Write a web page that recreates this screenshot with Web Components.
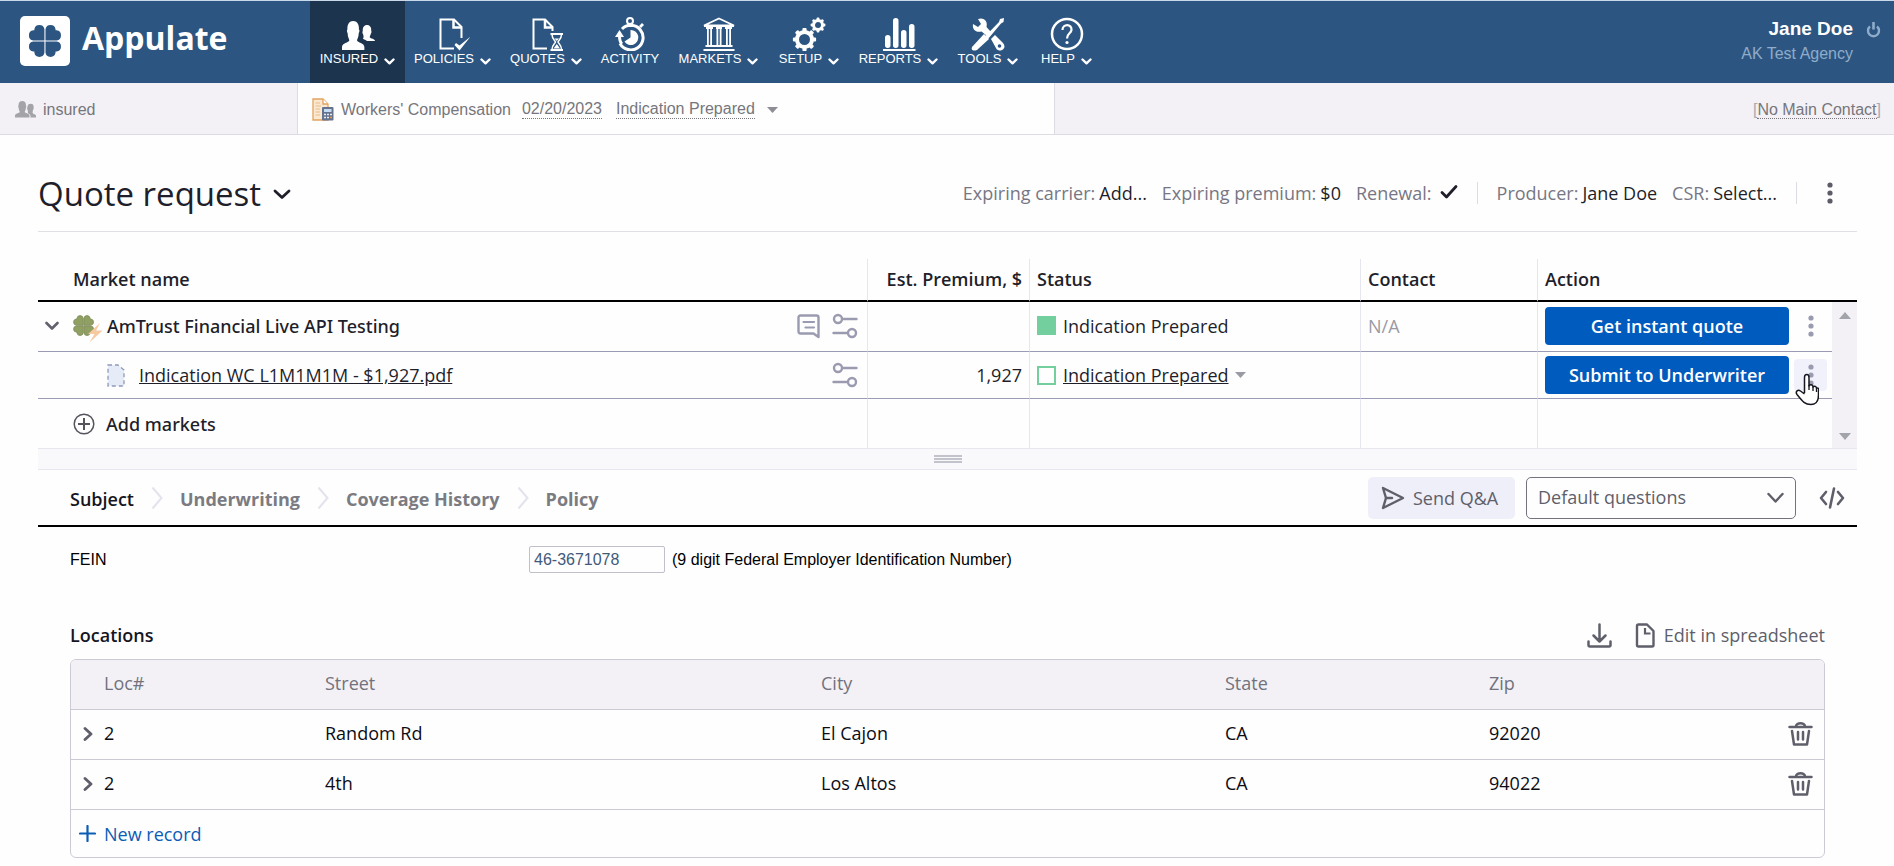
<!DOCTYPE html>
<html lang="en">
<head>
<meta charset="utf-8">
<meta name="viewport" content="width=device-width, initial-scale=1">
<title>Appulate - Quote request</title>
<style>
  body { margin: 0; background: #fefefe; color: #1f1f2b; font: 400 18px/24px "Open Sans", "Noto Sans", sans-serif; }
</style>
</head>
<body>
<appulate-app></appulate-app>

<script>
const QUADRANT = 'M15.5 15.5H5A4.8 4.8 0 0 1 5 6H6V5A4.8 4.8 0 0 1 15.5 5Z';
const CLOVER = `<path d="${QUADRANT}"/><path d="${QUADRANT}" transform="matrix(-1 0 0 1 32 0)"/>
  <path d="${QUADRANT}" transform="matrix(1 0 0 -1 0 32)"/><path d="${QUADRANT}" transform="matrix(-1 0 0 -1 32 32)"/>`;
const PERSON = 'M0 29V26C0 22 8 21.500 8.500 19.500C8.500 18 6.500 16 6.500 12C5.500 11 5.500 9 6.300 8.500C6 3 8.500 0 13 0S20 3 19.700 8.500C20.500 9 20.500 11 19.500 12C19.500 16 17.500 18 17.500 19.500C18 21.500 26 22 26 26V29Z';
const LINE = 'fill="none" stroke="currentColor" stroke-linecap="round" stroke-linejoin="round"';

function gear(cx, cy, r, hole, teeth, w) {
  let s = '';
  for (let i = 0; i < teeth; i++) {
    s += `<rect x="${cx - w / 2}" y="${cy - r - w * 0.5}" width="${w}" height="${w * 1.2}" rx="1" transform="rotate(${i * 360 / teeth} ${cx} ${cy})"/>`;
  }
  const mid = (r + hole) / 2;
  return s + `<circle cx="${cx}" cy="${cy}" r="${mid}" fill="none" stroke="currentColor" stroke-width="${r - hole}"/>`;
}

// name: [width, height, markup]
const ICONS = {
  logo: [50, 50, `<rect width="50" height="50" rx="5" fill="#fff"/><g transform="translate(8 8) scale(1.06)" fill="#2c5681">${CLOVER}</g>`],
  insured: [34, 34, `<g transform="translate(1 4)"><path d="${PERSON}" transform="scale(.86 1)"/><path d="M25 20C23 18.500 21 18.500 21 17.500C22 16 21.500 14.500 21 13C20 12 20.500 10.500 20.800 10C20.500 6.500 22 4 25 4S29.500 6.500 29.200 10C29.800 10.500 29.500 12 28.800 12.800C28.500 14.500 27.500 15.500 27.800 16.500C28.500 17.500 33 17.800 33 20Z"/></g>`],
  policies: [34, 34, `<g fill="none" stroke="currentColor" stroke-width="2"><path d="M18 31.500H4.500V2.500H18L25.500 10V21"/><path d="M17.500 2.500V10.500H25.500" stroke-width="2.500"/></g><path d="M18.500 28L23.500 33.500L34.500 19.500L23.500 28.500L20 26Z"/>`],
  quotes: [34, 34, `<g fill="none" stroke="currentColor" stroke-width="2"><path d="M18 31.500H4.500V2.500H16L23.500 10V14"/><path d="M16 2.500V10.500H23.500" stroke-width="2.500"/></g><g fill="none" stroke="currentColor" stroke-width="1.500"><path d="M21.500 17H34M21.500 33H34" stroke-width="2"/><path d="M23 17.500C23 22 26 23.500 26.500 25C26 26.500 23 28 23 32.500M32.500 17.500C32.500 22 29.500 23.500 29 25C29.500 26.500 32.500 28 32.500 32.500"/><path d="M25.500 21.500H30L27.800 24ZM27.800 27L31 31.500H24.500Z" fill="currentColor" stroke="none"/></g>`],
  activity: [34, 34, `<circle cx="17" cy="4" r="3" fill="none" stroke="currentColor" stroke-width="2"/><path d="M14.500 8h5v2h-5zM26 9l3-3 2 2-3 3z"/><path d="M9 12A12.300 12.300 0 1 1 7 26.500" fill="none" stroke="currentColor" stroke-width="3"/><path d="M2 20L6.500 13L11 20Z"/><path d="M5 19H8C8 22 8.500 24 10 26L7.500 28C5.500 25 5 22 5 19Z"/><path d="M17.500 13A7.500 7.500 0 1 1 11.500 24.500L17.500 20.500Z"/>`],
  markets: [34, 34, `<path d="M17 1.500L32 8.500H2Z" fill="none" stroke="currentColor" stroke-width="1.800"/><path d="M2 8h30v2H2zM4 10h7v2H4zM14 10h6v2h-6zM23 10h7v2h-7zM5 11h1.800v18H5zM8.200 11H10v18H8.200zM14.500 11h1.800v18h-1.800zM17.700 11h1.800v18h-1.800zM24 11h1.800v18H24zM27.200 11H29v18h-1.800zM3.500 28h27v2h-27zM1.500 32h31v2h-31z"/>`],
  setup: [34, 34, gear(12.500, 22.500, 9.500, 5.500, 8, 4.200) + gear(26, 8, 6, 3, 8, 2.800)],
  reports: [34, 34, `<rect x="3" y="18" width="5.500" height="13" rx="2.700"/><rect x="11" y="1" width="5.500" height="30" rx="2.700"/><rect x="19" y="13" width="5.500" height="18" rx="2.700"/><rect x="27" y="7" width="5.500" height="24" rx="2.700"/><path d="M1 32h32.500v2H1z"/>`],
  tools: [34, 34, `<path d="M1 30L13 17L18 22L6 33C2 34.500 0 33 1 30Z"/><path d="M14 19.500L28 5L29 2L33 1L32.500 5L30 6.500L17 22Z"/><path d="M2 7L7 10L10 7L7 2C13 0 17 4 15.500 10L20 15L16 19L10.500 14.500C5 16 1 12.500 2 7Z"/><path d="M20 22L24 18L32 26C34.500 29 33.500 32 31 33C29 34 27 33.500 25.500 32Z"/><circle cx="28.500" cy="29" r="1.800" fill="#2c5681"/>`],
  help: [34, 34, `<circle cx="17" cy="17" r="15" fill="none" stroke="currentColor" stroke-width="2.500"/><path d="M12.500 13C12.500 6.500 22 6.500 21.500 13C21 16.500 17 16.500 17 21.500" fill="none" stroke="currentColor" stroke-width="2.200"/><circle cx="17" cy="25.500" r="1.600"/>`],
  navDown: [11, 7, `<path d="M1.500 1.500L5.500 5.300L9.500 1.500" ${LINE} stroke-width="2.400"/>`],
  power: [15, 17, `<path d="M4 5.500A5.500 5.500 0 1 0 11 5.500" fill="none" stroke="currentColor" stroke-width="2.400"/><path d="M7.500 1V8.500" stroke="currentColor" stroke-width="2.600"/>`],
  people: [21, 17, `<g transform="scale(.62 .57)"><path d="${PERSON}" transform="scale(.9 1)"/><path d="M25 29V26C24.500 23 21.500 22.500 20.500 20C21.500 19 20.500 17 20 15C19 14 19.500 12 20 11C20.200 7 22 5 25.500 5S30.500 7.500 30 12C30.500 13 30 15 29 15.500C29 18 28 19.500 28.500 21C29.500 23 34 23.500 34 26V29Z"/></g>`],
  policyDoc: [22, 23, `<path d="M1 1H11L16 6V22H1Z" fill="#fbe8d0" stroke="#e3a35e" stroke-width="1.300"/><path d="M11 1V6H16" fill="#fff" stroke="#e3a35e" stroke-width="1.300"/><path d="M3.500 5H8M3.500 8H9M3.500 11H8M3.500 14H8M3.500 17H8" stroke="#e8bb8a"/><rect x="10" y="9" width="11.500" height="13.500" rx="1" fill="#66738f"/><rect x="12" y="11" width="7.500" height="3" fill="#c5dcf2"/><path d="M12 16.500h2M15 16.500h2M18 16.500h2M12 19.500h2M15 19.500h2" stroke="#e7eaf2" stroke-width="1.500"/><path d="M18 19.500h2" stroke="#e49a55" stroke-width="1.500"/>`],
  caret: [11, 6, `<path d="M0 0H11L5.500 6Z"/>`],
  caretUp: [12, 7, `<path d="M0 7H12L6 0Z"/>`],
  caretDown: [12, 7, `<path d="M0 0H12L6 7Z"/>`],
  titleDown: [18, 11, `<path d="M2 2L9 8.500L16 2" ${LINE} stroke-width="2.800"/>`],
  rowDown: [14, 10, `<path d="M1.500 2L7 7.500L12.500 2" ${LINE} stroke-width="2.600"/>`],
  rowRight: [10, 14, `<path d="M2 1.500L8 7L2 12.500" ${LINE} stroke-width="2.800"/>`],
  crumb: [12, 24, `<path d="M1.500 1.500L10.500 12L1.500 22.500" fill="none" stroke="currentColor" stroke-width="2"/>`],
  selectDown: [17, 12, `<path d="M1.500 2L8.500 9.500L15.500 2" ${LINE} stroke-width="2.400"/>`],
  check: [18, 16, `<path d="M2 8.500L6.500 13L16 2.500" ${LINE} stroke-width="2.800"/>`],
  dots: [8, 24, `<circle cx="4" cy="4" r="2.600"/><circle cx="4" cy="12" r="2.600"/><circle cx="4" cy="20" r="2.600"/>`],
  market: [30, 34, `<g transform="translate(0 6) scale(.66)" fill="#90a063" stroke="#7f8c5e" stroke-width="1.200">${CLOVER}</g><path d="M27 14L15 25H21.500L16.500 33.500L29.500 21.500H23Z" fill="#f6c9a0"/>`],
  comment: [25, 26, `<path d="M4.500 2.500H20.500Q22.500 2.500 22.500 4.500V24L17.500 20.500H4.500Q2.500 20.500 2.500 18.500V4.500Q2.500 2.500 4.500 2.500Z" ${LINE} stroke-width="2.400"/><path d="M7.500 9H18M9.500 14.500H18" ${LINE} stroke-width="2.200"/>`],
  sliders: [26, 26, `<g fill="none" stroke="currentColor" stroke-width="2.400" stroke-linecap="round"><circle cx="6" cy="6" r="4"/><path d="M10.500 6H24.500"/><circle cx="20" cy="20" r="4"/><path d="M1.500 20H15.500"/></g>`],
  draft: [18, 23, `<path d="M1 1H11L17 6V22H1Z" fill="#e6ebf8" stroke="#8e9ab8" stroke-width="1.300" stroke-dasharray="4 3"/>`],
  addCircle: [22, 22, `<circle cx="11" cy="11" r="9.800" fill="none" stroke="currentColor" stroke-width="1.500"/><path d="M11 5V17M5 11H17" stroke="currentColor" stroke-width="2"/>`],
  send: [24, 24, `<path d="M2 2L22 12L2 22L5 12Z" ${LINE} stroke-width="2.400"/><path d="M5 12H11" ${LINE} stroke-width="2.400"/>`],
  code: [26, 24, `<path d="M7 6L2 12L7 18M19 6L24 12L19 18M15 2.500L11 21.500" ${LINE} stroke-width="2.600"/>`],
  download: [25, 25, `<path d="M12.500 1.500V18M6.500 12.500L12.500 18.500L18.500 12.500M1.500 18.500V22Q1.500 23.500 3 23.500H22Q23.500 23.500 23.500 22V18.500" ${LINE} stroke-width="2.500"/>`],
  sheet: [20, 25, `<path d="M3.500 1.500H12L18.500 8V22Q18.500 23.500 17 23.500H3.500Q2 23.500 2 22V3Q2 1.500 3.500 1.500Z" ${LINE} stroke-width="2.400"/><path d="M10 5V10.500H15.500" fill="none" stroke="currentColor" stroke-width="2.200"/>`],
  trash: [25, 25, `<path d="M1.500 6H23.500M8 5.500C8 1 17 1 17 5.500M4 10L6 23.500H19L21 10M10 11V18.500M15 11V18.500" ${LINE} stroke-width="2.500"/>`],
  plus: [17, 17, `<path d="M8.500 1V16M1 8.500H16" ${LINE} stroke-width="2.200"/>`],
  hand: [24, 33, `<path d="M9.500 20V4.500C9.500 0.500 14 0.500 14 4.500V13C15 11 18 11.500 18 14C19.500 12.500 21.500 13.500 21.500 15.500C23 14.500 24 15.500 23.500 17.500V22C23.500 28 21 31.500 16 31.500C10 31.500 8 29 2 21.500C0 18.500 3 16 5.500 18L9.500 21" fill="#fff" stroke="#16161f" stroke-width="1.500" stroke-linejoin="round"/><path d="M14 12V17M18 14V18M21.500 16V19" stroke="#16161f" stroke-width="1.300"/>`]
};

/* Shared base: renders the class's static markup into an open shadow root. */
class UiElement extends HTMLElement {
  constructor() {
    super();
    const t = document.createElement('template');
    t.innerHTML = `<style>
      *, *::before, *::after { box-sizing: border-box; }
      a { color: inherit; }
      button { font: inherit; color: inherit; background: none; border: 0; margin: 0; padding: 0; cursor: pointer; }
      table { border-spacing: 0; width: 100%; table-layout: fixed; }
      th, td { text-align: left; padding: 0; }
      ${this.constructor.css}</style>${this.constructor.html}`;
    this.attachShadow({ mode: 'open' }).append(t.content.cloneNode(true));
  }
}

class UiIcon extends HTMLElement {
  connectedCallback() {
    if (this.shadowRoot) return;
    const [w, h, body] = ICONS[this.getAttribute('name')];
    this.attachShadow({ mode: 'open' }).innerHTML =
      `<style>:host{display:inline-flex;flex:none}svg{display:block}</style>
       <svg width="${w}" height="${h}" viewBox="0 0 ${w} ${h}" fill="currentColor" aria-hidden="true">${body}</svg>`;
  }
}
customElements.define('ui-icon', UiIcon);

class NavItem extends HTMLElement {
  connectedCallback() {
    if (this.shadowRoot) return;
    const chevron = this.hasAttribute('plain') ? '' : '<ui-icon name="navDown"></ui-icon>';
    this.attachShadow({ mode: 'open' }).innerHTML = `<style>
      :host { display: block; }
      :host([active]) { background: #1d344f; }
      a { display: flex; flex-direction: column; align-items: center; height: 100%; box-sizing: border-box; padding-top: 16px; color: #fff; text-decoration: none; font: 400 13px/16px "Liberation Sans", Arial, sans-serif; }
      span { display: flex; align-items: center; gap: 6px; }
      span ui-icon { padding-top: 4px; }
      </style><a href="#"><ui-icon name="${this.getAttribute('icon')}"></ui-icon><span><slot></slot>${chevron}</span></a>`;
  }
}
customElements.define('nav-item', NavItem);

class AppHeader extends UiElement {
  static css = `
    :host { display: flex; height: 83px; border-top: 1px solid #c9d9ea; background: #2c5681; color: #fff; font-family: "Liberation Sans", Arial, sans-serif; }
    .brand { display: flex; align-items: center; gap: 12px; width: 310px; padding: 0 0 2px 20px; color: #fff; text-decoration: none; font: 700 32px/44px "Open Sans", sans-serif; }
    .brand span { padding-bottom: 6px; }
    nav { display: grid; grid-template-columns: 95px 95px 92px 76px 101px 80px 99px 80px 77px; }
    .user { margin-left: auto; padding: 16px 13px 0 0; display: grid; grid-template-columns: auto auto; column-gap: 13px; align-content: start; text-align: right; }
    .name { font-weight: 700; font-size: 19px; line-height: 24px; }
    .agency { font-weight: 400; font-size: 16px; line-height: 26px; color: #8facca; }
    button { color: #8facca; display: flex; align-items: center; }
  `;
  static html = `
    <a class="brand" href="#"><ui-icon name="logo"></ui-icon><span>Appulate</span></a>
    <nav>
      <nav-item icon="insured" active>INSURED</nav-item>
      <nav-item icon="policies">POLICIES</nav-item>
      <nav-item icon="quotes">QUOTES</nav-item>
      <nav-item icon="activity" plain>ACTIVITY</nav-item>
      <nav-item icon="markets">MARKETS</nav-item>
      <nav-item icon="setup">SETUP</nav-item>
      <nav-item icon="reports">REPORTS</nav-item>
      <nav-item icon="tools">TOOLS</nav-item>
      <nav-item icon="help">HELP</nav-item>
    </nav>
    <div class="user">
      <span class="name">Jane Doe</span><button aria-label="Sign out"><ui-icon name="power"></ui-icon></button>
      <span class="agency">AK Test Agency</span>
    </div>`;
}
customElements.define('app-header', AppHeader);

class ContextBar extends UiElement {
  static css = `
    :host { display: flex; height: 52px; background: #f3f1f5; border-bottom: 1px solid #dddbe4; color: #76767c; font: 400 16px/20px "Liberation Sans", Arial, sans-serif; }
    .insured { display: flex; align-items: center; gap: 7px; width: 297px; padding: 2px 0 0 15px; text-decoration: none; }
    .insured ui-icon { color: #a3a3a8; }
    .policy { display: flex; align-items: center; width: 758px; padding: 2px 0 0 14px; background: #fefefe; border: solid #dddbe4; border-width: 0 1px; }
    .policy > ui-icon { margin-right: 7px; }
    .dotted { text-decoration: none; border-bottom: 1px dotted #76767c; line-height: 18px; }
    .date { margin: 0 14px 0 11px; }
    .policy button { margin-left: 12px; display: flex; color: #8d8d95; }
    .contact { margin-left: auto; padding: 17px 13px 0 0; color: #a9a9b2; }
    .contact a { color: #76767c; }
  `;
  static html = `
    <a class="insured" href="#"><ui-icon name="people"></ui-icon>insured</a>
    <div class="policy"><ui-icon name="policyDoc"></ui-icon>Workers' Compensation
      <a class="dotted date" href="#">02/20/2023</a><a class="dotted" href="#">Indication Prepared</a>
      <button aria-label="Change status"><ui-icon name="caret"></ui-icon></button></div>
    <div class="contact">[<a class="dotted" href="#">No Main Contact</a>]</div>`;
}
customElements.define('context-bar', ContextBar);

class QuoteTitle extends UiElement {
  static css = `
    :host { display: flex; align-items: center; height: 97px; padding-top: 22px; border-bottom: 1px solid #dfdfe4; }
    h1 { margin: 0; font-size: 33px; font-weight: 400; line-height: 46px; }
    h1 button { display: flex; align-items: center; gap: 12px; }
    dl { display: flex; align-items: center; gap: 15px; margin: 0 0 2px auto; }
    dl div { display: flex; gap: 4px; align-items: center; }
    dt { color: #777784; } dd { margin: 0; }
    dd ui-icon { padding-left: 4px; }
    .rule { width: 1px; height: 22px; margin: 0 4px; background: #dcdce2; }
    .more { margin: 0 23px 2px 25px; color: #5c5c68; display: flex; }
  `;
  static html = `
    <h1><button>Quote request<ui-icon name="titleDown"></ui-icon></button></h1>
    <dl>
      <div><dt>Expiring carrier:</dt><dd>Add...</dd></div>
      <div><dt>Expiring premium:</dt><dd>$0</dd></div>
      <div><dt>Renewal:</dt><dd aria-label="Yes"><ui-icon name="check"></ui-icon></dd></div>
      <div class="rule"></div>
      <div><dt>Producer:</dt><dd>Jane Doe</dd></div>
      <div><dt>CSR:</dt><dd>Select...</dd></div>
      <div class="rule"></div>
    </dl>
    <button class="more" aria-label="More"><ui-icon name="dots"></ui-icon></button>`;
}
customElements.define('quote-title', QuoteTitle);

class MarketTable extends UiElement {
  static css = `
    :host { display: block; margin-top: 27px; }
    .c-prem { width: 162px; } .c-status { width: 331px; } .c-contact { width: 177px; } .c-action { width: 295px; } .c-scroll { width: 25px; }
    th { height: 43px; font-weight: 600; border-bottom: 2px solid #000; padding-bottom: 2px; }
    th + th, td + td { border-left: 1px solid #e6e6f0; padding-left: 7px; }
    th:last-child, td.scroll { border-left: 0; padding: 0; }
    .num { text-align: right; padding-right: 7px; }
    td { height: 47px; border-bottom: 1px solid #9c9bb5; }
    tbody tr:first-child td { height: 50px; padding-bottom: 2px; }
    tbody tr:last-child td { height: 49px; border-bottom: 0; }
    th:first-child { padding-left: 35px; }
    tbody tr:first-child td.scroll { background: #f3f1f5; border: 0; padding: 0; color: #a3a3ab; }
    .bar { display: flex; flex-direction: column; justify-content: space-between; align-items: center; height: 146px; padding: 10px 0 8px; }
    .bar button, .toggle, .tools button, .caret { display: flex; }
    .cell { display: flex; align-items: center; }
    .toggle { width: 35px; padding-left: 7px; color: #62626f; }
    .name { margin-left: 4px; font-family: "Noto Sans", sans-serif; font-weight: 500; }
    .tools { display: flex; gap: 11px; margin-left: auto; padding-right: 9px; color: #9a9bb0; }
    .file { padding-left: 69px; gap: 14px; }
    .add { padding-left: 35px; gap: 11px; font-family: "Noto Sans", sans-serif; font-weight: 500; }
    .add ui-icon { color: #55555f; }
    .swatch { width: 19px; height: 19px; margin-right: 7px; border: 2px solid #74cf9f; }
    .full { background: #74cf9f; }
    .caret { margin-left: 6px; color: #9a9aa5; }
    .na { color: #9a9aa5; }
    .go { width: 244px; height: 38px; border-radius: 4px; background: #005bbe; color: #fff; font-weight: 600; text-align: center; }
    .more { position: relative; display: grid; place-items: center; width: 33px; height: 32px; margin-left: 5px; border-radius: 4px; color: #9a9bb0; }
    .hover { background: #f1f1fb; }
    .hand { position: absolute; left: 1px; top: 14px; }
    .grip { display: grid; place-items: center; height: 22px; border: solid #e8e6ee; border-width: 1px 0; background: #f9f8fb; }
    .grip i { width: 28px; height: 8px; border: solid #c3c3cb; border-width: 2px 0; display: grid; align-items: center; }
    .grip i::before { content: ""; height: 2px; background: #c3c3cb; }
  `;
  static html = `
    <table>
      <colgroup><col><col class="c-prem"><col class="c-status"><col class="c-contact"><col class="c-action"><col class="c-scroll"></colgroup>
      <thead><tr><th scope="col">Market name</th><th scope="col" class="num">Est. Premium, $</th><th scope="col">Status</th><th scope="col">Contact</th><th scope="col">Action</th><th></th></tr></thead>
      <tbody>
        <tr>
          <td><div class="cell"><button class="toggle" aria-label="Collapse"><ui-icon name="rowDown"></ui-icon></button><ui-icon name="market"></ui-icon><span class="name">AmTrust Financial Live API Testing</span>
            <span class="tools"><button aria-label="Comments"><ui-icon name="comment"></ui-icon></button><button aria-label="Settings"><ui-icon name="sliders"></ui-icon></button></span></div></td>
          <td></td>
          <td><div class="cell"><span class="swatch full"></span>Indication Prepared</div></td>
          <td class="na">N/A</td>
          <td><div class="cell"><button class="go">Get instant quote</button><button class="more" aria-label="More"><ui-icon name="dots"></ui-icon></button></div></td>
          <td class="scroll" rowspan="3"><div class="bar"><button aria-label="Scroll up"><ui-icon name="caretUp"></ui-icon></button><button aria-label="Scroll down"><ui-icon name="caretDown"></ui-icon></button></div></td>
        </tr>
        <tr>
          <td><div class="cell file"><ui-icon name="draft"></ui-icon><a href="#">Indication WC L1M1M1M - $1,927.pdf</a>
            <span class="tools"><button aria-label="Settings"><ui-icon name="sliders"></ui-icon></button></span></div></td>
          <td class="num">1,927</td>
          <td><div class="cell"><span class="swatch"></span><a href="#">Indication Prepared</a><button class="caret" aria-label="Change status"><ui-icon name="caret"></ui-icon></button></div></td>
          <td></td>
          <td><div class="cell"><button class="go">Submit to Underwriter</button><button class="more hover" aria-label="More"><ui-icon name="dots"></ui-icon><ui-icon class="hand" name="hand"></ui-icon></button></div></td>
        </tr>
        <tr>
          <td><button class="cell add"><ui-icon name="addCircle"></ui-icon>Add markets</button></td>
          <td></td><td></td><td></td><td></td>
        </tr>
      </tbody>
    </table>
    <div class="grip"><i></i></div>`;
}
customElements.define('market-table', MarketTable);

class SectionTabs extends UiElement {
  static css = `
    :host { display: flex; align-items: center; justify-content: space-between; height: 57px; padding: 0 12px 0 32px; border-bottom: 2px solid #000; color: #5f5f6b; }
    nav { display: flex; align-items: center; gap: 17px; font-weight: 700; color: #7b7b82; }
    nav a { text-decoration: none; padding-top: 2px; }
    nav a[aria-current] { color: #15151f; font-weight: 600; }
    nav ui-icon { color: #e3e3ee; }
    .actions { display: flex; align-items: center; gap: 11px; }
    .send { display: flex; align-items: center; gap: 8px; width: 147px; height: 42px; padding-left: 13px; border-radius: 5px; background: #eeeff9; }
    .pick { display: grid; align-items: center; }
    .pick > * { grid-area: 1 / 1; }
    .pick ui-icon { justify-self: end; margin-right: 12px; pointer-events: none; }
    select { appearance: none; width: 270px; height: 42px; padding: 0 34px 2px 11px; border: 1px solid #73737f; border-radius: 5px; background: #fefefe; color: inherit; font: inherit; }
    .code { display: flex; margin-left: 12px; }
  `;
  static html = `
    <nav aria-label="Sections">
      <a href="#" aria-current="page">Subject</a><ui-icon name="crumb"></ui-icon>
      <a href="#">Underwriting</a><ui-icon name="crumb"></ui-icon>
      <a href="#">Coverage History</a><ui-icon name="crumb"></ui-icon>
      <a href="#">Policy</a>
    </nav>
    <div class="actions">
      <button class="send"><ui-icon name="send"></ui-icon>Send Q&amp;A</button>
      <div class="pick"><select aria-label="Question set"><option>Default questions</option></select><ui-icon name="selectDown"></ui-icon></div>
      <button class="code" aria-label="Source"><ui-icon name="code"></ui-icon></button>
    </div>`;
}
customElements.define('section-tabs', SectionTabs);

class FeinField extends UiElement {
  static css = `
    :host { display: grid; grid-template-columns: 459px 136px 1fr; align-items: center; margin: 19px 0 38px; color: #000; font: 400 16px/20px "Liberation Sans", Arial, sans-serif; }
    input { width: 100%; height: 27px; padding: 0 4px; border: 1px solid #c0bfca; border-radius: 2px; background: #fefefe; color: #3f5a7c; font: inherit; }
    span { padding-left: 7px; }
  `;
  static html = `<label for="fein">FEIN</label><input id="fein" value="46-3671078"><span>(9 digit Federal Employer Identification Number)</span>`;
}
customElements.define('fein-field', FeinField);

class LocationsTable extends UiElement {
  static css = `
    :host { display: block; }
    header { display: flex; align-items: center; height: 48px; color: #5f5f6b; }
    h2 { margin: 0 auto 0 0; font-size: 18px; font-weight: 600; color: #15151f; }
    header button { display: flex; align-items: center; gap: 9px; margin-left: 23px; }
    .frame { border: 1px solid #cccbd5; border-radius: 6px; overflow: hidden; }
    .c-loc { width: 246px; } .c-city { width: 404px; } .c-state { width: 264px; } .c-zip { width: 168px; } .c-del { width: 175px; }
    th { height: 50px; font-weight: 400; color: #72727d; background: #f3f1f5; border-bottom: 1px solid #cccbd5; padding: 0 0 3px 8px; }
    td { height: 50px; padding: 0 0 4px 8px; color: #0c0c14; border-bottom: 1px solid #cccbd5; }
    th:first-child { padding-left: 33px; }
    td:first-child { padding-left: 12px; }
    .loc { display: flex; align-items: center; gap: 11px; }
    .loc button, .del { display: flex; color: #5f5f6b; }
    .loc button { padding-top: 2px; }
    .del { margin: 0 11px 0 auto; padding-top: 2px; }
    tfoot td { height: 47px; border: 0; }
    tfoot td:first-child { padding: 0 0 0 8px; }
    tfoot button { display: flex; align-items: center; gap: 8px; color: #0b5cb5; }
  `;
  static html = `
    <header><h2 id="t">Locations</h2>
      <button aria-label="Download"><ui-icon name="download"></ui-icon></button>
      <button><ui-icon name="sheet"></ui-icon>Edit in spreadsheet</button></header>
    <div class="frame"><table aria-labelledby="t">
      <colgroup><col class="c-loc"><col><col class="c-city"><col class="c-state"><col class="c-zip"><col class="c-del"></colgroup>
      <thead><tr><th scope="col">Loc#</th><th scope="col">Street</th><th scope="col">City</th><th scope="col">State</th><th scope="col">Zip</th><th></th></tr></thead>
      <tbody>
        <tr><td><div class="loc"><button aria-label="Expand"><ui-icon name="rowRight"></ui-icon></button>2</div></td><td>Random Rd</td><td>El Cajon</td><td>CA</td><td>92020</td><td><button class="del" aria-label="Delete"><ui-icon name="trash"></ui-icon></button></td></tr>
        <tr><td><div class="loc"><button aria-label="Expand"><ui-icon name="rowRight"></ui-icon></button>2</div></td><td>4th</td><td>Los Altos</td><td>CA</td><td>94022</td><td><button class="del" aria-label="Delete"><ui-icon name="trash"></ui-icon></button></td></tr>
      </tbody>
      <tfoot><tr><td colspan="6"><button><ui-icon name="plus"></ui-icon>New record</button></td></tr></tfoot>
    </table></div>`;
}
customElements.define('locations-table', LocationsTable);

class AppulateApp extends UiElement {
  static css = `
    :host { display: block; }
    main { padding: 0 37px 0 38px; }
    .subject { padding: 0 32px; }
  `;
  static html = `
    <app-header></app-header>
    <context-bar></context-bar>
    <main>
      <quote-title></quote-title>
      <market-table></market-table>
      <section-tabs></section-tabs>
      <section class="subject">
        <fein-field></fein-field>
        <locations-table></locations-table>
      </section>
    </main>`;
}
customElements.define('appulate-app', AppulateApp);
</script>
</body>
</html>
